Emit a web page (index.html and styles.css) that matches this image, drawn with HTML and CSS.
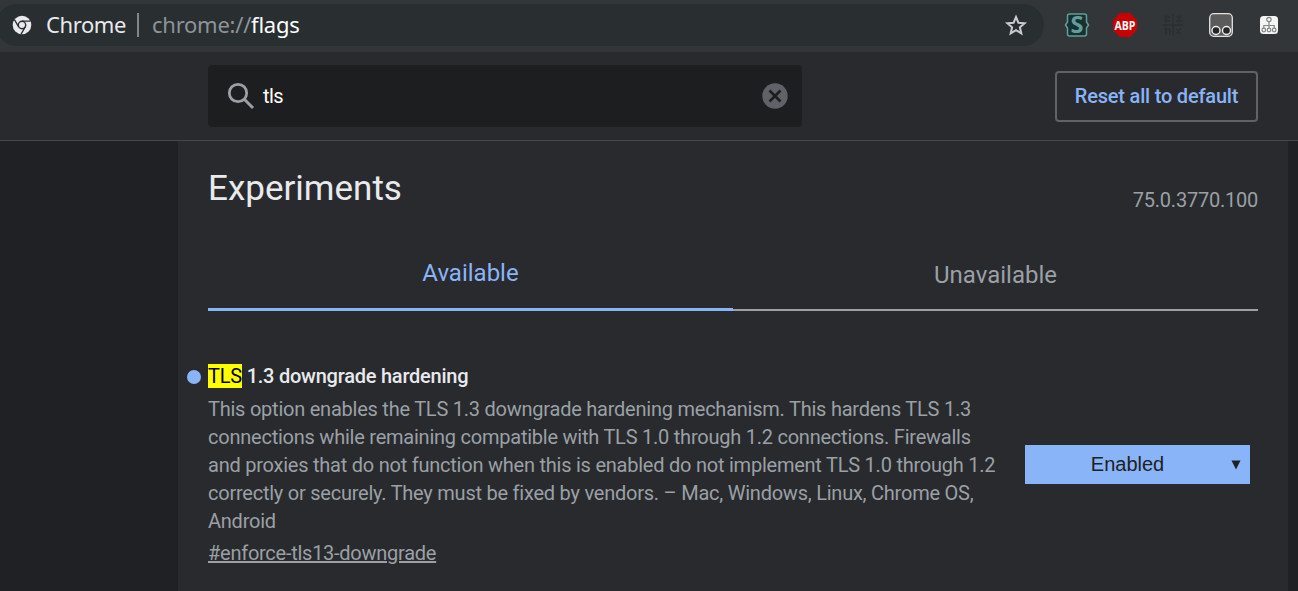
FILE: index.html
```html
<!DOCTYPE html>
<html lang="en">
<head>
<meta charset="utf-8">
<title>Experiments</title>
<link rel="stylesheet" href="styles.css">
</head>
<body>
<header class="toolbar">
  <div class="omnibox">
    <svg class="chrome-icon" viewBox="0 0 20 20"><circle cx="10" cy="10" r="9.3" fill="#e8eaed"/><circle cx="10" cy="10" r="3.7" fill="#e8eaed" stroke="#292e30" stroke-width="1.4"/><path d="M10 6.2H18.6M6.7 11.9L2.4 4.6M13.3 11.9L8.9 19.4" stroke="#292e30" stroke-width="1.3"/></svg>
    <span class="origin">Chrome</span>
    <span class="divider"></span>
    <span class="url">chrome://<b>flags</b></span>
    <svg class="star" viewBox="0 0 24 24"><path d="M12 4L14.400 9.700L20.600 10.200L15.900 14.300L17.300 20.300L12 17.100L6.700 20.300L8.100 14.300L3.400 10.200L9.600 9.700Z" fill="none" stroke="#c9ccd0" stroke-width="2"/></svg>
  </div>
  <nav class="extensions">
    <svg viewBox="0 0 24 24"><path d="M4.500 1H19.500Q21.500 1 21.500 3V9L23.500 12L21.500 15V21Q21.500 23 19.500 23H4.500Q2.500 23 2.500 21V15L.5 12L2.500 9V3Q2.500 1 4.500 1Z" fill="#153230" stroke="#659b9a" stroke-width="1.5"/><text x="12" y="20" class="stylus" textLength="13" lengthAdjust="spacingAndGlyphs">S</text></svg>
    <svg viewBox="0 0 24 24"><path d="M7 0H17L24 7V17L17 24H7L0 17V7Z" fill="#c70000"/><text x="12" y="16.500" class="abp" textLength="21" lengthAdjust="spacingAndGlyphs">ABP</text></svg>
    <svg viewBox="0 0 24 24"><path d="M2 12H22M12 1V23M3 4H9M3 8H9M5 2V10M15 4H21M15 8H21M18 2V10M3 16H9M5 14V22M9 16V22M15 16L20 21M20 15L15 21" fill="none" stroke="#2c2f31" stroke-width="1.300"/></svg>
    <svg viewBox="0 0 24 24"><rect x=".7" y=".7" width="22.600" height="22.600" rx="4" fill="#5b5b5b" stroke="#e2e2e2" stroke-width="1.300"/><circle cx="7" cy="17.500" r="4" fill="#252525" stroke="#eee" stroke-width="1.400"/><circle cx="17.500" cy="17.500" r="4" fill="#252525" stroke="#eee" stroke-width="1.400"/></svg>
    <svg viewBox="0 0 24 24"><rect x="3" y="3" width="18" height="18" rx="3.500" fill="#f4f4f4"/><g fill="#f4f4f4" stroke="#858585" stroke-width="1.200"><path d="M12 8.500V15M6.800 15V12.500H17.200V15" fill="none"/><circle cx="12" cy="6.500" r="2.200"/><circle cx="6.800" cy="17" r="1.800"/><circle cx="12" cy="17" r="1.800"/><circle cx="17.200" cy="17" r="1.800"/></g></svg>
  </nav>
</header>
<div class="search-bar">
  <div class="search">
    <svg class="magnifier" viewBox="0 0 28 28"><circle cx="11" cy="11" r="8.700" fill="none" stroke="#9aa0a6" stroke-width="2.800"/><path d="M17.300 17.300L26 26" stroke="#9aa0a6" stroke-width="3"/></svg>
    <span class="query">tls</span>
    <svg class="clear" viewBox="0 0 26 26"><circle cx="13" cy="13" r="12.700" fill="#5f6368"/><path d="M7.500 7.500L18.500 18.500M18.500 7.500L7.500 18.500" stroke="#1d1e1f" stroke-width="2.700"/></svg>
  </div>
  <button class="reset">Reset all to default</button>
</div>
<main class="content">
  <div class="heading"><h1>Experiments</h1><span class="version">75.0.3770.100</span></div>
  <div class="tabs"><div class="tab active">Available</div><div class="tab">Unavailable</div></div>
  <section class="flag">
    <div class="details">
      <h2><mark>TLS</mark> 1.3 downgrade hardening</h2>
      <p>This option enables the TLS 1.3 downgrade hardening mechanism. This hardens TLS 1.3<br>connections while remaining compatible with TLS 1.0 through 1.2 connections. Firewalls<br>and proxies that do not function when this is enabled do not implement TLS 1.0 through 1.2<br>correctly or securely. They must be fixed by vendors. – Mac, Windows, Linux, Chrome OS,<br>Android</p>
      <a class="permalink">#enforce-tls13-downgrade</a>
    </div>
    <div class="select"><span>Enabled</span><svg viewBox="0 0 10 10"><path d="M.5 .5H9.500L5 9.500Z" fill="#202124"/></svg></div>
  </section>
</main>
</body>
</html>
```
FILE: styles.css
```css
* { box-sizing: border-box; }
body { margin: 0; height: 591px; overflow: hidden; background: #202124; font: 20px/28px Roboto, sans-serif; color: #9aa0a6; }
.toolbar { display: flex; height: 52px; background: #323639; padding-top: 4px; }
.omnibox { display: flex; align-items: center; width: 1048px; height: 42px; margin-left: -4px; padding: 0 16px; border-radius: 21px; background: #292e30; font-family: "Noto Sans", sans-serif; font-size: 22px; }
.chrome-icon { width: 20px; height: 20px; }
.origin { width: 81px; margin-left: 14px; padding-bottom: 2px; color: #e8eaed; letter-spacing: -.4px; }
.divider { width: 2px; height: 24px; margin: 0 13px 0 10px; background: #80868b; }
.url { padding-bottom: 2px; color: #8c949a; letter-spacing: -.25px; }
.url b { color: #fff; font-weight: 400; }
.star { width: 24px; height: 24px; margin-left: auto; }
.extensions { display: flex; gap: 24px; padding: 9px 0 0 21px; }
.extensions svg { width: 24px; height: 24px; overflow: visible; }
.stylus { font: bold 23px "Noto Sans", sans-serif; fill: #659b9a; text-anchor: middle; }
.abp { font: bold 12px "Open Sans", sans-serif; fill: #fff; text-anchor: middle; }
.search-bar { display: flex; justify-content: space-between; height: 89px; padding: 13px 40px 0 208px; border-bottom: 1px solid #46484c; background: #292a2d; }
.search { display: flex; align-items: center; width: 594px; height: 62px; padding: 0 14px 0 19px; border-radius: 4px; background: #1d1e1f; }
.magnifier { width: 28px; height: 28px; }
.query { margin-left: 8px; color: #fff; letter-spacing: -.6px; }
.clear { width: 26px; height: 26px; margin-left: auto; }
.reset { width: 203px; height: 51px; margin-top: 6px; padding: 0 0 2px; border: 2px solid #5f6368; border-radius: 4px; background: none; color: #8ab4f8; font: 500 20px Roboto, sans-serif; letter-spacing: -.2px; }
.content { width: 1110px; height: 450px; margin-left: 178px; padding: 26px 30px 0; background: #292a2d; }
.heading { display: flex; justify-content: space-between; height: 89px; }
h1 { margin: 0; color: #e8eaed; font-size: 35px; font-weight: 400; line-height: 44px; }
.version { padding-top: 19px; letter-spacing: -.23px; }
.tabs { display: flex; height: 55px; }
.tab { flex: 1; padding-top: 5px; border-bottom: 2px solid #9aa0a6; text-align: center; font-size: 24px; }
.active { padding-top: 3px; border-bottom: 3px solid #8ab4f8; color: #8ab4f8; }
.flag { display: flex; justify-content: space-between; padding: 51px 8px 0 0; }
.details { white-space: nowrap; letter-spacing: -.235px; }
h2 { position: relative; margin: 0 0 5px; color: #e8eaed; font-size: 20px; font-weight: 500; line-height: 28px; }
h2::before { content: ""; position: absolute; left: -21px; top: 8px; width: 14px; height: 14px; border-radius: 50%; background: #8ab4f8; }
mark { background: #ff0; color: #000; font-weight: 400; }
p { margin: 0 0 4px; }
.permalink { text-decoration: underline; letter-spacing: -.26px; }
.select { display: flex; align-items: center; width: 225px; height: 39px; margin-top: 83px; padding-right: 9px; background: #8ab4f8; color: #202124; font-family: "Liberation Sans", sans-serif; }
.select span { flex: 1; padding: 0 1px 2px 0; text-align: center; }
.select svg { width: 10px; height: 10px; }
```
